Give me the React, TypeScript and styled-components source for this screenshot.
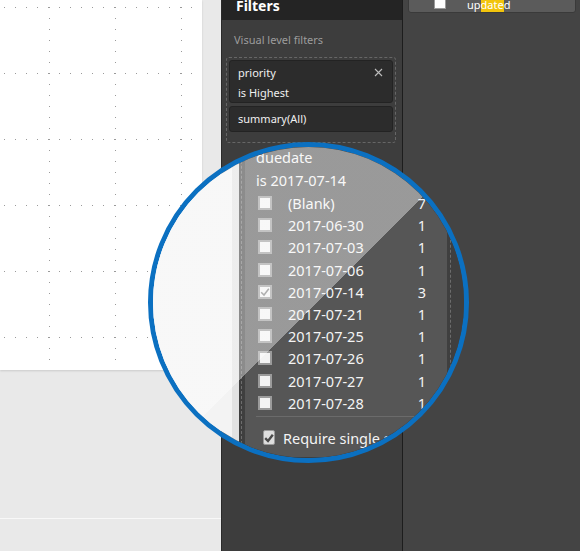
import React from "react";
import styled, { createGlobalStyle } from "styled-components";

const GlobalStyle = createGlobalStyle`
  html, body {
    margin: 0;
    padding: 0;
    overflow: hidden;
    background: #e9e9e9;
  }
`;

const FONT = `"Noto Sans", "Open Sans", "Liberation Sans", sans-serif`;

// 전체 화면
const Page = styled.div`
  position: relative;
  display: flex;
  width: 580px;
  height: 551px;
  overflow: hidden;
  font-family: ${FONT};
`;

// 보고서 캔버스 영역
const ReportArea = styled.div`
  width: 221px;
  flex-shrink: 0;
  display: flex;
  flex-direction: column;
  background: #e9e9e9;
`;

const Canvas = styled.div`
  width: 202px;
  height: 370px;
  background-color: #ffffff;
  background-image: conic-gradient(from 270deg at 1px 1px, #9a9a9a 90deg, transparent 0),
    conic-gradient(from 270deg at 1px 1px, #9a9a9a 90deg, transparent 0);
  background-size: 11px 66px, 66px 11px;
  background-position: 4px 7px, 49px 7px;
  box-shadow: 0 1px 2px rgba(0, 0, 0, 0.13);
`;

const PageTabsLine = styled.div`
  margin-top: 148px;
  height: 1px;
  background: #f8f8f8;
`;

// 필터 패널
const FilterPane = styled.div`
  width: 180px;
  flex-shrink: 0;
  background: #3d3d3d;
  border-left: 1px solid #2a2a2a;
  border-right: 1px solid #1d1d1d;
  display: flex;
  flex-direction: column;
`;

const PaneHeader = styled.div`
  height: 20px;
  background: #242424;
  padding-left: 14px;
  overflow: hidden;
`;

const PaneTitle = styled.div`
  margin-top: -4px;
  font-size: 14px;
  line-height: 20px;
  font-weight: 700;
  color: #ffffff;
`;

const SectionLabel = styled.div`
  margin: 12px 0 0 12px;
  font-size: 11px;
  line-height: 16px;
  color: #9c9c9c;
`;

const DropZone = styled.div`
  margin: 9px 6px 0 4px;
  padding: 2px 2px 10px 2px;
  border: 1px dashed #666666;
  border-radius: 3px;
  display: flex;
  flex-direction: column;
  gap: 3px;
`;

const FilterCard = styled.div<{ $height: number }>`
  height: ${(p) => p.$height}px;
  box-sizing: border-box;
  padding: 1px 9px 0 8px;
  background: #2c2c2c;
  border: 1px solid #232323;
  border-radius: 3px;
`;

const CardRow = styled.div`
  display: flex;
  align-items: center;
  justify-content: space-between;
  height: 20px;
  font-size: 11px;
  color: #f0f0f0;
`;

// 필드 목록 패널
const FieldsPane = styled.div`
  flex: 1;
  background: #444444;
  padding: 0 4px 0 5px;
`;

const FieldItem = styled.div`
  height: 23px;
  margin-top: -10px;
  padding-top: 6px;
  box-sizing: border-box;
  display: flex;
  align-items: center;
  background: #5b5b5b;
  border: 1px solid #3a3a3a;
  border-radius: 0 0 3px 3px;
  font-size: 11px;
  color: #ffffff;
`;

const FieldCheck = styled.span`
  width: 12px;
  height: 12px;
  margin: -4px 0 0 25px;
  box-sizing: border-box;
  background: #ffffff;
  border: 1px solid #9a9a9a;
`;

const FieldName = styled.span`
  margin-left: 21px;
`;

const Hit = styled.span`
  background: #f2c40c;
`;

// 돋보기
const Magnifier = styled.div`
  position: absolute;
  left: 148px;
  top: 142px;
  width: 321px;
  height: 321px;
  box-sizing: border-box;
  border-radius: 50%;
  border: 5px solid #0b70c1;
  overflow: hidden;
  display: flex;

  &::after {
    content: "";
    position: absolute;
    inset: 0;
    background: linear-gradient(
      135deg,
      rgba(255, 255, 255, 0.4) 51.4%,
      rgba(255, 255, 255, 0) 51.4%
    );
    pointer-events: none;
  }
`;

const MagCanvas = styled.div`
  width: 79px;
  flex-shrink: 0;
  background: #f3f3f3;
`;

const MagStrip = styled.div`
  width: 7px;
  flex-shrink: 0;
  background: #e2e2e2;
`;

const MagPane = styled.div`
  flex: 1;
  background: #3f3f3f;
  padding-left: 2px;
`;

const MagDropZone = styled.div`
  width: 210px;
  box-sizing: border-box;
  margin-top: -12px;
  padding: 3px;
  border: 1px dashed #6c6c6c;
  border-radius: 3px;
`;

const MagCard = styled.div`
  background: #565656;
  border-radius: 3px;
  padding: 7px 21px 5px 11px;
  font-size: 14.5px;
  color: #f4f4f4;
`;

const MagLine = styled.div`
  height: 23px;
  line-height: 23px;
  white-space: nowrap;
`;

const ValueRow = styled.div`
  height: 22.2px;
  display: flex;
  align-items: center;
  white-space: nowrap;
`;

const Box = styled.span`
  width: 14px;
  height: 14px;
  margin-left: 2px;
  box-sizing: border-box;
  flex-shrink: 0;
  display: flex;
  align-items: center;
  justify-content: center;
  background: #f3f3f3;
  border: 2px solid #9b9b9b;
`;

const ValueLabel = styled.span`
  margin-left: 16px;
  flex: 1;
`;

const ValueCount = styled.span`
  text-align: right;
`;

const Separator = styled.div`
  margin-top: 2px;
  height: 1px;
  background: #6b6b6b;
`;

const RequireRow = styled.div`
  margin-top: 7px;
  height: 28px;
  display: flex;
  align-items: center;
  white-space: nowrap;
`;

const RequireBox = styled.span`
  width: 15px;
  height: 15px;
  margin-left: 7px;
  box-sizing: border-box;
  display: flex;
  align-items: center;
  justify-content: center;
  background: #dedede;
  border: 1px solid #9a9a9a;
  border-radius: 2px;
`;

const RequireLabel = styled.span`
  margin-left: 8px;
`;

const values = [
  { label: "(Blank)", count: 7 },
  { label: "2017-06-30", count: 1 },
  { label: "2017-07-03", count: 1 },
  { label: "2017-07-06", count: 1 },
  { label: "2017-07-14", count: 3, checked: true },
  { label: "2017-07-21", count: 1 },
  { label: "2017-07-25", count: 1 },
  { label: "2017-07-26", count: 1 },
  { label: "2017-07-27", count: 1 },
  { label: "2017-07-28", count: 1 },
];

const CloseIcon = () => (
  <svg width="9" height="9" viewBox="0 0 9 9">
    <path d="M1 1 L8 8 M8 1 L1 8" stroke="#bdbdbd" strokeWidth="1.1" fill="none" />
  </svg>
);

const Tick = ({ color, width }: { color: string; width: number }) => (
  <svg width="10" height="10" viewBox="0 0 10 10">
    <path d="M1.2 5.2 L4 8 L8.8 1.8" stroke={color} strokeWidth={width} fill="none" />
  </svg>
);

const App = () => {
  return (
    <>
      <GlobalStyle />
      <Page>
        <ReportArea>
          <Canvas />
          <PageTabsLine />
        </ReportArea>

        <FilterPane>
          <PaneHeader>
            <PaneTitle>Filters</PaneTitle>
          </PaneHeader>
          <SectionLabel>Visual level filters</SectionLabel>
          <DropZone>
            <FilterCard $height={43}>
              <CardRow>
                <span>priority</span>
                <CloseIcon />
              </CardRow>
              <CardRow>is Highest</CardRow>
            </FilterCard>
            <FilterCard $height={26}>
              <CardRow>summary(All)</CardRow>
            </FilterCard>
          </DropZone>
        </FilterPane>

        <FieldsPane>
          <FieldItem>
            <FieldCheck />
            <FieldName>
              up<Hit>date</Hit>d
            </FieldName>
          </FieldItem>
        </FieldsPane>

        <Magnifier>
          <MagCanvas />
          <MagStrip />
          <MagPane>
            <MagDropZone>
              <MagCard>
                <MagLine>duedate</MagLine>
                <MagLine>is 2017-07-14</MagLine>
                {values.map((v) => (
                  <ValueRow key={v.label}>
                    <Box>{v.checked && <Tick color="#7a7a7a" width={1.5} />}</Box>
                    <ValueLabel>{v.label}</ValueLabel>
                    <ValueCount>{v.count}</ValueCount>
                  </ValueRow>
                ))}
                <Separator />
                <RequireRow>
                  <RequireBox>
                    <Tick color="#4a4a4a" width={2.4} />
                  </RequireBox>
                  <RequireLabel>Require single selection</RequireLabel>
                </RequireRow>
              </MagCard>
            </MagDropZone>
          </MagPane>
        </Magnifier>
      </Page>
    </>
  );
};

export default App;
